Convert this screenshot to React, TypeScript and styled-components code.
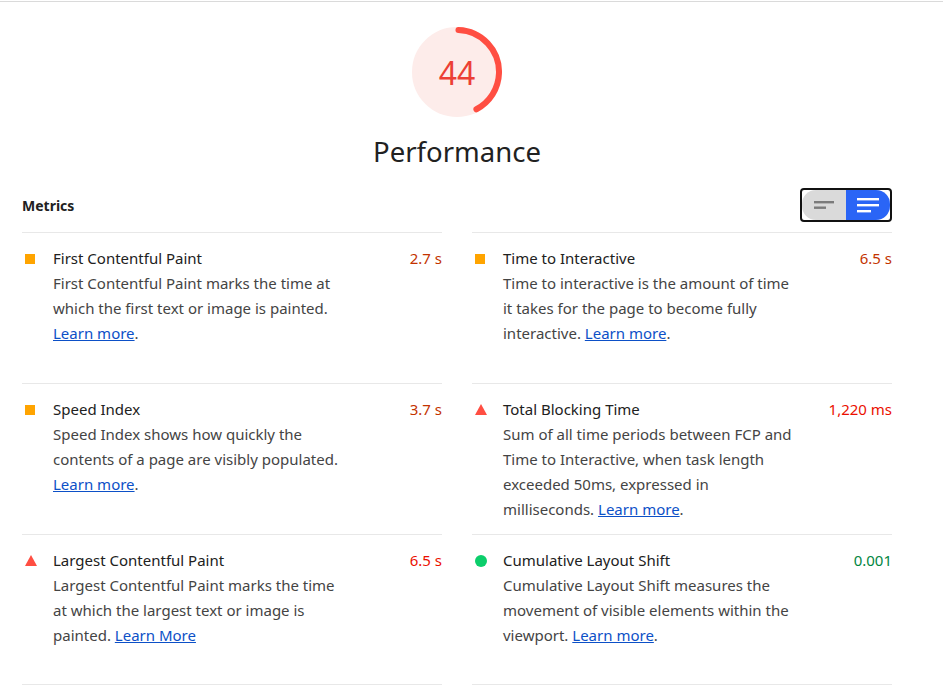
import React from "react";
import styled, { createGlobalStyle } from "styled-components";

const Global = createGlobalStyle`
  html, body { margin: 0; padding: 0; background: #fff; }
  body { font-family: "Noto Sans", "Open Sans", sans-serif; color: #212121; }
`;

const Page = styled.div`
  display: flex;
  flex-direction: column;
`;

const TopRule = styled.div`
  height: 1px;
  margin-top: 1px;
  background: #dadada;
`;

const Content = styled.main`
  width: 870px;
  margin-left: 22px;
  display: flex;
  flex-direction: column;
`;

const GaugeWrap = styled.div`
  display: flex;
  flex-direction: column;
  align-items: center;
  margin-top: 25px;
`;

const GaugeBox = styled.div`
  position: relative;
  width: 90px;
  height: 90px;
`;

const GaugeNumber = styled.div`
  position: absolute;
  inset: 0;
  display: flex;
  align-items: center;
  justify-content: center;
  font-size: 32px;
  color: #ec3f35;
`;

const GaugeLabel = styled.div`
  margin-top: 17px;
  font-size: 27.5px;
  line-height: 36px;
  color: #212121;
`;

const Header = styled.div`
  display: flex;
  align-items: center;
  justify-content: space-between;
  margin-top: 18px;
  padding-bottom: 10px;
`;

const HeaderTitle = styled.div`
  font-size: 14px;
  font-weight: 700;
  color: #212121;
`;

const Toggle = styled.div`
  display: flex;
  border: 2px solid #111;
  border-radius: 4px;
  width: 88px;
  height: 30px;
  overflow: hidden;
`;

const ToggleHalf = styled.div<{ $active?: boolean; $side: "left" | "right" }>`
  flex: 1;
  display: flex;
  align-items: center;
  justify-content: center;
  background: ${(p) => (p.$active ? "#2a65f6" : "#dadada")};
  border-radius: ${(p) => (p.$side === "left" ? "14px 0 0 14px" : "0 14px 14px 0")};
`;

const Grid = styled.div`
  display: grid;
  grid-template-columns: 1fr 1fr;
  grid-auto-rows: 1fr;
  column-gap: 30px;
`;

const Metric = styled.div`
  border-top: 1px solid #e8e8e8;
  padding: 13px 0 12px;
  display: grid;
  grid-template-columns: 31px 1fr 95px;
  grid-template-rows: auto auto;
  align-content: start;
  font-size: 15px;
  line-height: 25px;
  &:nth-last-child(-n + 2) {
    border-bottom: 1px solid #e8e8e8;
  }
`;

const IconCell = styled.div`
  display: flex;
  align-items: center;
  padding-left: 3px;
  height: 25px;
`;

const MetricTitle = styled.div`
  color: #212121;
`;

const MetricValue = styled.div<{ $color: string }>`
  text-align: right;
  color: ${(p) => p.$color};
`;

const Description = styled.div`
  grid-column: 2 / 3;
  color: #444;
`;

const Link = styled.a`
  color: #0c50c7;
  text-decoration: underline;
`;

type Rating = "average" | "fail" | "pass";

const valueColor: Record<Rating, string> = {
  average: "#c33300",
  fail: "#eb0f00",
  pass: "#018642",
};

const ScoreIcon = ({ rating }: { rating: Rating }) => {
  if (rating === "average")
    return (
      <svg width="10" height="10" viewBox="0 0 10 10">
        <rect width="10" height="10" fill="#ffa400" />
      </svg>
    );
  if (rating === "fail")
    return (
      <svg width="12" height="11" viewBox="0 0 12 11">
        <polygon points="6,0 12,11 0,11" fill="#ff4e42" />
      </svg>
    );
  return (
    <svg width="12" height="12" viewBox="0 0 12 12">
      <circle cx="6" cy="6" r="6" fill="#0cce6b" />
    </svg>
  );
};

type M = {
  title: string;
  value: string;
  rating: Rating;
  desc: string;
  link: string;
  tail: string;
};

const metrics: M[] = [
  {
    title: "First Contentful Paint",
    value: "2.7 s",
    rating: "average",
    desc: "First Contentful Paint marks the time at which the first text or image is painted. ",
    link: "Learn more",
    tail: ".",
  },
  {
    title: "Time to Interactive",
    value: "6.5 s",
    rating: "average",
    desc: "Time to interactive is the amount of time it takes for the page to become fully interactive. ",
    link: "Learn more",
    tail: ".",
  },
  {
    title: "Speed Index",
    value: "3.7 s",
    rating: "average",
    desc: "Speed Index shows how quickly the contents of a page are visibly populated. ",
    link: "Learn more",
    tail: ".",
  },
  {
    title: "Total Blocking Time",
    value: "1,220 ms",
    rating: "fail",
    desc: "Sum of all time periods between FCP and Time to Interactive, when task length exceeded 50ms, expressed in milliseconds. ",
    link: "Learn more",
    tail: ".",
  },
  {
    title: "Largest Contentful Paint",
    value: "6.5 s",
    rating: "fail",
    desc: "Largest Contentful Paint marks the time at which the largest text or image is painted. ",
    link: "Learn More",
    tail: "",
  },
  {
    title: "Cumulative Layout Shift",
    value: "0.001",
    rating: "pass",
    desc: "Cumulative Layout Shift measures the movement of visible elements within the viewport. ",
    link: "Learn more",
    tail: ".",
  },
];

const R = 56;
const C = 2 * Math.PI * R;

export default function App() {
  return (
    <Page>
      <Global />
      <TopRule />
      <Content>
        <GaugeWrap>
          <GaugeBox>
            <svg width="90" height="90" viewBox="0 0 120 120">
              <circle cx="60" cy="60" r={R} fill="#fdecea" stroke="#fdecea" strokeWidth="8" />
              <circle
                cx="60"
                cy="60"
                r={R}
                fill="none"
                stroke="#ff4e42"
                strokeWidth="8"
                strokeLinecap="round"
                strokeDasharray={`${C * 0.44 - 8} ${C}`}
                transform="rotate(-88 60 60)"
              />
            </svg>
            <GaugeNumber>44</GaugeNumber>
          </GaugeBox>
          <GaugeLabel>Performance</GaugeLabel>
        </GaugeWrap>
        <Header>
          <HeaderTitle>Metrics</HeaderTitle>
          <Toggle>
            <ToggleHalf $side="left">
              <svg width="22" height="12" viewBox="0 0 22 12">
                <rect x="1" y="2" width="20" height="2.4" fill="#7b7b7b" />
                <rect x="1" y="7.5" width="12" height="2.4" fill="#7b7b7b" />
              </svg>
            </ToggleHalf>
            <ToggleHalf $side="right" $active>
              <svg width="24" height="16" viewBox="0 0 24 16">
                <rect x="1" y="1" width="22" height="2.4" fill="#fff" />
                <rect x="1" y="7" width="22" height="2.4" fill="#fff" />
                <rect x="1" y="13" width="14" height="2.4" fill="#fff" />
              </svg>
            </ToggleHalf>
          </Toggle>
        </Header>
        <Grid>
          {metrics.map((m) => (
            <Metric key={m.title}>
              <IconCell>
                <ScoreIcon rating={m.rating} />
              </IconCell>
              <MetricTitle>{m.title}</MetricTitle>
              <MetricValue $color={valueColor[m.rating]}>{m.value}</MetricValue>
              <Description>
                {m.desc}
                <Link href="#">{m.link}</Link>
                {m.tail}
              </Description>
            </Metric>
          ))}
        </Grid>
      </Content>
    </Page>
  );
}
